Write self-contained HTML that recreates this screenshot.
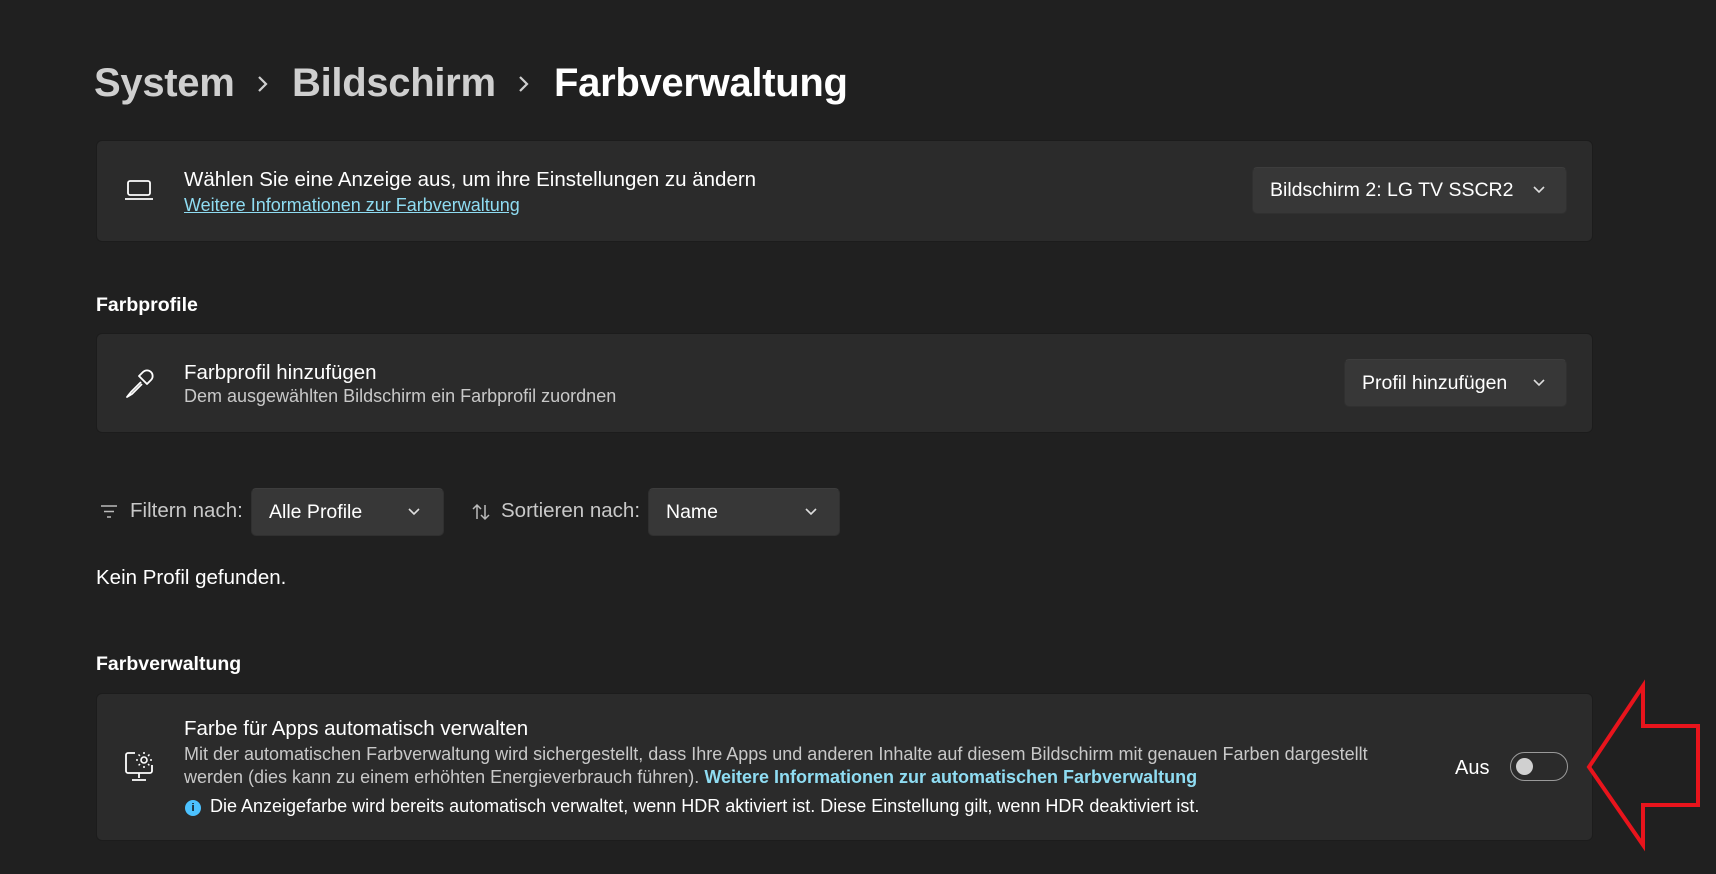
<!DOCTYPE html>
<html><head><meta charset="utf-8"><style>
*{margin:0;padding:0;box-sizing:border-box}
body{width:1716px;height:874px;background:#202020;font-family:"Segoe UI","Liberation Sans",sans-serif;color:#fff;position:relative;overflow:hidden}
.a{position:absolute;white-space:nowrap}
.card{position:absolute;left:96px;width:1497px;background:#2b2b2b;border:1px solid #1c1c1c;border-radius:6px}
.t{font-size:20.5px;color:#fff}
.s{font-size:18px;color:#c8c8c8}
.dd{position:absolute;background:#373737;border:1px solid #303030;border-top-color:#3d3d3d;border-radius:5px;font-size:19.5px;display:flex;align-items:center}
.h{font-size:19.5px;font-weight:bold}
</style></head><body>
<div class="a" style="left:94px;top:58px;font-size:40px;font-weight:bold;line-height:50px;letter-spacing:-0.3px">
<span style="color:#cfcfcf">System</span></div>
<svg class="a" style="left:256px;top:75px" width="14" height="18"><path d="M3 2 L10 9 L3 16" stroke="#cfcfcf" stroke-width="2.2" fill="none"/></svg>
<div class="a" style="left:292px;top:58px;font-size:40px;font-weight:bold;line-height:50px;color:#cfcfcf;letter-spacing:-0.3px">Bildschirm</div>
<svg class="a" style="left:517px;top:75px" width="14" height="18"><path d="M3 2 L10 9 L3 16" stroke="#cfcfcf" stroke-width="2.2" fill="none"/></svg>
<div class="a" style="left:554px;top:58px;font-size:40px;font-weight:bold;line-height:50px;color:#fff;letter-spacing:-0.3px">Farbverwaltung</div>

<div class="card" style="top:140px;height:102px"></div>
<svg class="a" style="left:124px;top:178px" width="30" height="24"><rect x="4" y="3" width="22" height="14" rx="2" stroke="#fff" stroke-width="1.8" fill="none"/><path d="M1 21 H29" stroke="#fff" stroke-width="1.8"/></svg>
<div class="a t" style="left:184px;top:168px">Wählen Sie eine Anzeige aus, um ihre Einstellungen zu ändern</div>
<div class="a" style="left:184px;top:195px;font-size:18px;color:#8fdcf2;text-decoration:underline">Weitere Informationen zur Farbverwaltung</div>
<div class="dd" style="left:1252px;top:167px;width:315px;height:47px;padding-left:17px">Bildschirm 2: LG TV SSCR2</div>
<svg class="a" style="left:1532px;top:185px" width="14" height="10"><path d="M2 2 L7 7 L12 2" stroke="#ddd" stroke-width="1.6" fill="none"/></svg>

<div class="a h" style="left:96px;top:294px">Farbprofile</div>
<div class="card" style="top:333px;height:100px"></div>
<svg class="a" style="left:123px;top:368px" width="32" height="32"><path d="M20 4 a4 4 0 0 1 8 8 l-4 4 l-8 -8 z M16 8 l8 8 M18 14 L8 24 L4 29 L9 26 L19 16" stroke="#fff" stroke-width="1.8" fill="none" stroke-linejoin="round"/></svg>
<div class="a t" style="left:184px;top:361px">Farbprofil hinzufügen</div>
<div class="a s" style="left:184px;top:386px">Dem ausgewählten Bildschirm ein Farbprofil zuordnen</div>
<div class="dd" style="left:1344px;top:359px;width:223px;height:48px;padding-left:17px">Profil hinzufügen</div>
<svg class="a" style="left:1532px;top:378px" width="14" height="10"><path d="M2 2 L7 7 L12 2" stroke="#ddd" stroke-width="1.6" fill="none"/></svg>

<svg class="a" style="left:100px;top:504px" width="18" height="16"><path d="M1 2H17M4 7.5H14M7 13H11" stroke="#bbb" stroke-width="1.5"/></svg>
<div class="a" style="left:130px;top:499px;font-size:20.5px;color:#c8c8c8">Filtern nach:</div>
<div class="dd" style="left:251px;top:488px;width:193px;height:48px;padding-left:17px">Alle Profile</div>
<svg class="a" style="left:407px;top:507px" width="14" height="10"><path d="M2 2 L7 7 L12 2" stroke="#ddd" stroke-width="1.6" fill="none"/></svg>
<svg class="a" style="left:471px;top:502px" width="20" height="20"><path d="M6 17V3M2 7l4-4 4 4M14 3v14M10 13l4 4 4-4" stroke="#bbb" stroke-width="1.5" fill="none"/></svg>
<div class="a" style="left:501px;top:499px;font-size:20.5px;color:#c8c8c8">Sortieren nach:</div>
<div class="dd" style="left:648px;top:488px;width:192px;height:48px;padding-left:17px">Name</div>
<svg class="a" style="left:804px;top:507px" width="14" height="10"><path d="M2 2 L7 7 L12 2" stroke="#ddd" stroke-width="1.6" fill="none"/></svg>

<div class="a" style="left:96px;top:566px;font-size:20.5px">Kein Profil gefunden.</div>
<div class="a h" style="left:96px;top:653px">Farbverwaltung</div>

<div class="card" style="top:693px;height:148px"></div>
<svg class="a" style="left:123px;top:750px" width="32" height="34"><path d="M12 3H5a2 2 0 0 0-2 2v16a2 2 0 0 0 2 2h22a2 2 0 0 0 2-2v-6" stroke="#fff" stroke-width="1.8" fill="none"/><path d="M16 23v5M9 30h14" stroke="#fff" stroke-width="1.8"/><circle cx="21" cy="10" r="3" stroke="#fff" stroke-width="1.6" fill="none"/><path d="M21 2v2M21 16v2M13 10h2M27 10h2M15.5 4.5l1.4 1.4M25 14l1.4 1.4M26.5 4.5L25 6M17 14l-1.4 1.4" stroke="#fff" stroke-width="1.5"/></svg>
<div class="a t" style="left:184px;top:717px">Farbe für Apps automatisch verwalten</div>
<div class="a s" style="left:184px;top:744px">Mit der automatischen Farbverwaltung wird sichergestellt, dass Ihre Apps und anderen Inhalte auf diesem Bildschirm mit genauen Farben dargestellt</div>
<div class="a s" style="left:184px;top:767px">werden (dies kann zu einem erhöhten Energieverbrauch führen). <b style="color:#8fdcf2">Weitere Informationen zur automatischen Farbverwaltung</b></div>
<div class="a" style="left:185px;top:800px;width:16px;height:16px;border-radius:50%;background:#4cc2ff;color:#111;font-size:11px;font-weight:bold;text-align:center;line-height:16px">i</div>
<div class="a" style="left:210px;top:796px;font-size:18px;color:#fff">Die Anzeigefarbe wird bereits automatisch verwaltet, wenn HDR aktiviert ist. Diese Einstellung gilt, wenn HDR deaktiviert ist.</div>
<div class="a" style="left:1455px;top:757px;font-size:20px">Aus</div>
<div class="a" style="left:1510px;top:752px;width:58px;height:29px;border:1.5px solid #9a9a9a;border-radius:15px"><div style="position:absolute;left:5px;top:5px;width:17px;height:17px;border-radius:50%;background:#d0d0d0"></div></div>

<svg class="a" style="left:0;top:0" width="1716" height="874"><path d="M1589 767 L1643 686 L1643 726 L1698 726 L1698 805 L1643 805 L1643 845 Z" stroke="#e8141c" stroke-width="4" fill="none" stroke-linejoin="miter"/></svg>
</body></html>
